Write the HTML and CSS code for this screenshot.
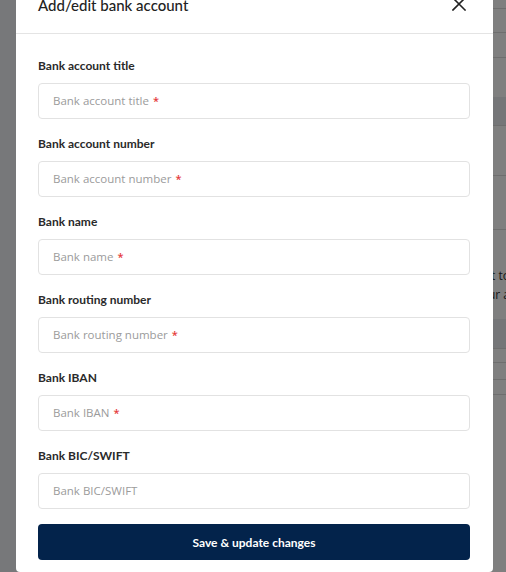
FILE: index.html
```html
<!DOCTYPE html>
<html lang="en">
<head>
<meta charset="utf-8">
<title>Add/edit bank account</title>
<link rel="stylesheet" href="styles.css">
</head>
<body>
<div class="page">
  <aside class="side"></aside>
  <main class="main">
    <div class="row r1"></div>
    <div class="row r2"></div>
    <div class="row r3"></div>
    <div class="band b1"></div>
    <div class="row r4"></div>
    <div class="row r5"></div>
    <div class="note">
      <p>Connect your bank account to</p>
      <p>receive payouts to your a</p>
    </div>
    <div class="band b2"></div>
    <div class="row r6"></div>
    <div class="row r7"></div>
    <div class="row r8"></div>
  </main>
</div>
<div class="overlay"></div>
<div class="modal">
  <div class="modal-head">
    <h2 class="modal-title">Add/edit bank account</h2>
    <button class="close" aria-label="Close">
      <svg width="14" height="14" viewBox="0 0 14 14"><path d="M1 1L13 13M13 1L1 13" stroke="#222" stroke-width="1.6" fill="none" stroke-linecap="square"/></svg>
    </button>
  </div>
  <div class="modal-body">
    <div class="group">
      <div class="label">Bank account title</div>
      <div class="input"><span>Bank account title</span><span class="req">*</span></div>
    </div>
    <div class="group">
      <div class="label">Bank account number</div>
      <div class="input"><span>Bank account number</span><span class="req">*</span></div>
    </div>
    <div class="group">
      <div class="label">Bank name</div>
      <div class="input"><span>Bank name</span><span class="req">*</span></div>
    </div>
    <div class="group">
      <div class="label">Bank routing number</div>
      <div class="input"><span>Bank routing number</span><span class="req">*</span></div>
    </div>
    <div class="group">
      <div class="label">Bank IBAN</div>
      <div class="input"><span>Bank IBAN</span><span class="req">*</span></div>
    </div>
    <div class="group">
      <div class="label">Bank BIC/SWIFT</div>
      <div class="input"><span>Bank BIC/SWIFT</span></div>
    </div>
    <button class="save">Save &amp; update changes</button>
  </div>
</div>
</body>
</html>
```

FILE: styles.css
```css
* { box-sizing: border-box; }
html, body { margin: 0; padding: 0; height: 100%; overflow: hidden; }
body { font-family: "Open Sans", "Liberation Sans", sans-serif; background: #fff; }

.page { display: flex; height: 572px; }
.side { width: 250px; background: #eef0f4; flex: none; }
.main { flex: 1; background: #fefefe; display: flex; flex-direction: column; }
.row { border-bottom: 1px solid #dcdcdc; }
.r1 { height: 9px; }
.r2 { height: 24px; }
.r3 { height: 25px; }
.band { background: #eaecf0; border-bottom: 1px solid #dcdcdc; }
.b1 { margin-top: 39px; height: 29px; }
.r4 { height: 50px; }
.r5 { height: 54px; }
.note { height: 89px; padding-top: 36px; text-align: right; color: #333; font-size: 12px; line-height: 19px; margin-right: -4px; }
.note p { margin: 0; }
.b2 { height: 30px; }
.r6 { height: 14px; }
.r7 { height: 17px; }
.r8 { height: 15px; }

.overlay { position: fixed; inset: 0; background: rgba(0, 0, 0, 0.5); }

.modal {
  position: absolute;
  top: -22px;
  left: 16px;
  width: 477px;
  background: #fff;
  border-radius: 4px;
}
.modal-head {
  display: flex;
  align-items: center;
  justify-content: space-between;
  padding: 17px 27px 18px 22px;
  border-bottom: 1px solid #e4e4e4;
}
.modal-title {
  margin: 0;
  font-family: Lato, "Liberation Sans", sans-serif;
  font-weight: 500;
  font-size: 15px;
  line-height: 20px;
  color: #222;
}
.close { border: 0; background: none; padding: 0; width: 14px; height: 14px; display: flex; margin-top: -2px; }

.modal-body { padding: 24px 23px 12px 22px; display: flex; flex-direction: column; }
.group { display: flex; flex-direction: column; gap: 9px; margin-bottom: 17px; }
.group:last-of-type { margin-bottom: 15px; }
.label {
  font-family: Lato, "Liberation Sans", sans-serif;
  font-weight: 700;
  font-size: 12px;
  line-height: 16px;
  color: #2a2a2a;
}
.input {
  height: 36px;
  border: 1px solid #e2e2e2;
  border-radius: 4px;
  padding: 0 14px 1px;
  display: flex;
  align-items: center;
  gap: 4px;
  font-size: 11.5px;
  color: #9b9b9b;
}
.req { color: #e53b3b; font-weight: 600; font-size: 11px; }
.save {
  height: 36px;
  border: 0;
  border-radius: 4px;
  background: #03234b;
  color: #fff;
  font-family: Lato, "Liberation Sans", sans-serif;
  font-weight: 700;
  font-size: 12px;
  padding-bottom: 1px;
}
```
